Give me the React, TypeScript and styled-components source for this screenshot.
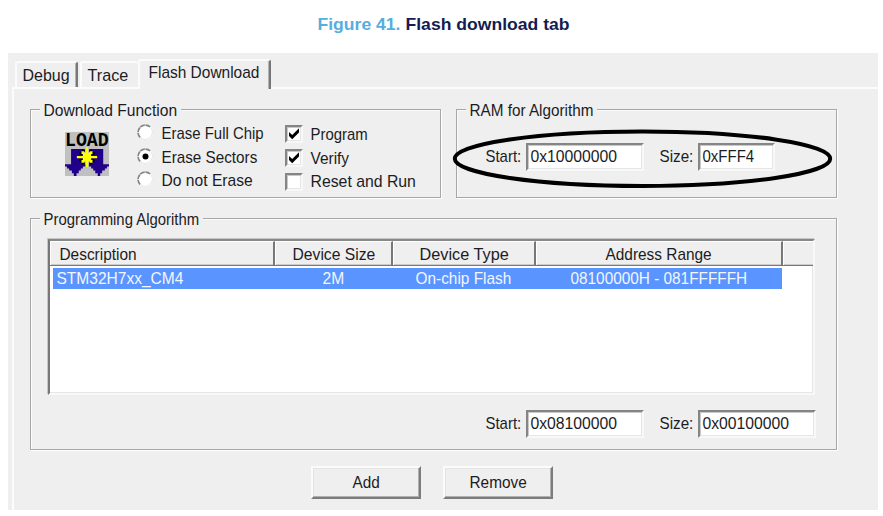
import React, { useLayoutEffect, useRef, useState } from 'react';
import styled, { createGlobalStyle, css } from 'styled-components';

const face = '#efefef';
const etch = '#a6a6a6';

const GlobalStyle = createGlobalStyle`
  * { box-sizing: border-box; }
  body { margin: 0; background: #fff; }
`;

const Page = styled.main`
  width: 883px;
  height: 516px;
  overflow: hidden;
  background: #fff;
  color: #1c1c24;
  font: 17px/20px "Liberation Sans", Arial, sans-serif;
`;

const Caption = styled.h1`
  display: flex;
  gap: 6px;
  height: 53px;
  margin: 0;
  padding: 14px 0 0 318px;
  font-size: 16.5px;
  font-weight: bold;
`;

const FigureNumber = styled.span` color: #57addf; `;
const FigureTitle = styled.span` color: #141c52; `;

const FitBox = styled.span<{ $width: number }>`
  display: block;
  flex: none;
  width: ${p => p.$width}px;
  height: 20px;
  white-space: pre;
`;

const FitInner = styled.span`
  display: inline-block;
  transform-origin: 0 50%;
`;

/* Condenses a line of text to the given advance width. */
function Fit({ w, children }: { w: number; children: string }) {
  const ref = useRef<HTMLSpanElement>(null);
  const [scale, setScale] = useState(1);
  useLayoutEffect(() => {
    if (ref.current) setScale((w + 1) / ref.current.offsetWidth);
  }, [w, children]);
  return (
    <FitBox $width={w}>
      <FitInner ref={ref} style={{ transform: `translateX(-0.5px) scaleX(${scale})` }}>{children}</FitInner>
    </FitBox>
  );
}

const Dialog = styled.section`
  width: 870px;
  height: 457px;
  margin-left: 8px;
  padding: 6px 0 0 4px;
  background: ${face};
`;

const Tabs = styled.nav`
  display: flex;
  align-items: flex-end;
  height: 28px;
  padding-left: 3px;
`;

const Tab = styled.div<{ $width: number; $active?: boolean; $edge?: boolean; $gap?: number }>`
  width: ${p => p.$width}px;
  height: ${p => (p.$active ? 30 : 26)}px;
  margin: 0 ${p => p.$gap ?? 0}px ${p => (p.$active ? -2 : 0)}px 0;
  padding: ${p => (p.$active ? '2px 0 0 9px' : '3px 0 0 6px')};
  background: ${face};
  border-top: 2px solid #fbfbfb;
  border-left: 2px solid #fbfbfb;
  border-radius: 3px 3px 0 0;
  ${p => p.$edge && css`
    border-right: 2px solid #777;
    box-shadow: inset -1px 0 0 #b4b4b4;
  `}
`;

const TabPage = styled.div`
  height: 423px;
  padding: 20px 0 0 17px;
  border-top: 2px solid #fcfcfc;
  border-left: 2px solid #fcfcfc;
`;

const TopGroups = styled.div`
  display: flex;
  gap: 15px;
  margin-left: -1px;
`;

const Group = styled.section<{ $width: number; $height: number }>`
  width: ${p => p.$width}px;
  height: ${p => p.$height}px;
  border: 1px solid ${etch};
  box-shadow: 1px 1px 0 #fff, inset 1px 1px 0 #fbfbfb;
`;

const GroupTitle = styled.div`
  width: max-content;
  height: 20px;
  margin: -9px 0 0 9px;
  padding: 0 4px;
  background: ${face};
`;

const FunctionBody = styled.div`
  display: flex;
  padding: 1px 0 0 34px;
`;

const LoadIcon = styled.svg`
  flex: none;
  width: 44px;
  height: 44px;
  margin: 10px 28px 0 0;
  overflow: visible;
`;

const Options = styled.div<{ $width: number; $top: number }>`
  width: ${p => p.$width}px;
  padding-top: ${p => p.$top}px;
`;

const Option = styled.label<{ $gap: number }>`
  display: flex;
  align-items: center;
  gap: ${p => p.$gap}px;
  height: 23.7px;
`;

const Radio = styled.svg`
  flex: none;
  width: 17px;
  height: 17px;
  margin-top: -3px;
`;

const sunken = css`
  background: #fff;
  border: 2px solid;
  border-color: #858585 #f8f8f8 #f8f8f8 #858585;
  box-shadow: inset 1px 1px 0 #c9c9c9, inset -1px -1px 0 #e6e6e6;
`;

const CheckBox = styled.span`
  ${sunken}
  display: flex;
  flex: none;
  width: 18px;
  height: 18px;
  margin-top: -1px;
`;

const Tick = styled.svg`
  width: 14px;
  height: 14px;
`;

const RangeRow = styled.div<{ $top: number; $left: number }>`
  display: flex;
  align-items: center;
  margin: ${p => p.$top}px 0 0 ${p => p.$left}px;
`;

const Field = styled.div<{ $width: number; $after?: number }>`
  ${sunken}
  width: ${p => p.$width}px;
  height: 28px;
  margin: 0 ${p => p.$after ?? 0}px 0 5px;
  padding: 2px 0 0 3px;
`;

const RamWrap = styled.div` position: relative; `;

const Ellipse = styled.svg`
  position: absolute;
  left: -6px;
  top: 17px;
  width: 386px;
  height: 66px;
  pointer-events: none;
`;

const AlgorithmSpace = styled.div` margin: 20px 0 0 -1px; `;

const List = styled.div`
  width: 767px;
  height: 156px;
  margin: 9px 0 0 17px;
  background: #fff;
  border: 2px solid;
  border-color: #777 #f8f8f8 #f8f8f8 #777;
  border-top-color: #888;
  box-shadow: inset -1px -1px 0 #e6e6e6, -1px -1px 0 #c6c6c6;
`;

const columns = '225px 118px 143px 247px 1fr';

const Header = styled.div`
  display: grid;
  grid-template-columns: ${columns};
  height: 25px;
  background: ${face};
  border-bottom: 2px solid #777;
`;

const HeaderCell = styled.div<{ $pad: number; $last?: boolean }>`
  padding: 3px 0 0 ${p => p.$pad}px;
  border-top: 1px solid #fff;
  border-left: 1px solid #fff;
  border-right: ${p => (p.$last ? '0' : '2px solid #777')};
  box-shadow: inset 0 -1px 0 #ccc;
`;

const Row = styled.div`
  display: grid;
  grid-template-columns: 222px 118px 143px 246px;
  width: 729px;
  height: 21px;
  margin: 2px 0 0 3px;
  padding-top: 1px;
  background: #5a94ff;
  color: #f2f6ff;
`;

const Cell = styled.div<{ $pad: number }>` padding-left: ${p => p.$pad}px; `;

const Actions = styled.div`
  display: flex;
  gap: 22px;
  margin: 16px 0 0 280px;
`;

const Button = styled.button`
  display: flex;
  align-items: center;
  justify-content: center;
  width: 110px;
  height: 33px;
  padding: 0;
  font: inherit;
  color: inherit;
  background: ${face};
  border: 2px solid;
  border-color: #fbfbfb #7c7c7c #7c7c7c #fbfbfb;
  box-shadow: inset -1px -1px 0 #b0b0b0, inset 1px 1px 0 #e4e4e4;
`;

function RadioMark({ checked }: { checked?: boolean }) {
  return (
    <Radio viewBox="0 0 17 17">
      <circle cx="8.5" cy="8.5" r="7.5" fill="#fff" />
      <path d="M3.2 13.5A7.2 7.2 0 0 1 13.5 3.2" fill="none" stroke="#858585" strokeWidth="1.7" strokeDasharray="5 .6" />
      <path d="M14 4A7.2 7.2 0 0 1 4 14" fill="none" stroke="#e5e5e5" strokeWidth="1" />
      {checked && <circle cx="8.5" cy="8.5" r="3" fill="#000" />}
    </Radio>
  );
}

function CheckMark({ checked }: { checked?: boolean }) {
  return (
    <CheckBox>
      {checked && (
        <Tick viewBox="0 0 14 14">
          <path d="M2 5L5.2 8L12 1.2V5.4L5.2 12.2L2 9Z" fill="#000" />
        </Tick>
      )}
    </CheckBox>
  );
}

function LoadMark() {
  return (
    <LoadIcon viewBox="0 0 32 32">
      <rect width="32" height="32" fill="#c0c0c0" />
      <path fill="#20008a" d="M4.4 12.4H13.5V23.5H14.8V25H13V26.5H11.5V28H10V30H8.4V32H6.4V30H5V28H3V26.5H1.5V25H0V23.5H4.4Z" />
      <path fill="#20008a" d="M27.8 12.4H18.5V23.5H17.4V25H19V26.5H20.5V28H22V30H23.8V32H25.6V30H27V28H29V26.5H30.5V25H32V23.5H27.8Z" />
      <path
        fill="#000"
        d="M12.5 12.5h2v2h-2zM17.5 12.5h2v2h-2zM10.5 14.5h2v2h-2zM19.5 14.5h2v2h-2zM10.5 20h2v2h-2zM19.5 20h2v2h-2zM12.5 22h2v1.6h-2zM17.5 22h2v1.6h-2z"
      />
      <path
        fill="#ff0"
        d="M13 15.2H19V21.2H13ZM15.2 11H16.8V25.4H15.2ZM8.6 17.4H23.4V19H8.6ZM12 14h2v2h-2zM18 14h2v2h-2zM12 20.4h2v2h-2zM18 20.4h2v2h-2z"
      />
      <text
        x="0"
        y="10.2"
        fontFamily="Liberation Mono, monospace"
        fontWeight="bold"
        fontSize="15"
        textLength="31.8"
        lengthAdjust="spacingAndGlyphs"
      >
        LOAD
      </text>
    </LoadIcon>
  );
}

const radios = [
  { label: 'Erase Full Chip', w: 101 },
  { label: 'Erase Sectors', w: 95, checked: true },
  { label: 'Do not Erase', w: 90 },
];

const checks = [
  { label: 'Program', w: 56, checked: true },
  { label: 'Verify', w: 38, checked: true },
  { label: 'Reset and Run', w: 104 },
];

export default function App() {
  return (
    <Page>
      <GlobalStyle />
      <Caption>
        <FigureNumber><Fit w={82}>Figure 41.</Fit></FigureNumber>
        <FigureTitle><Fit w={163}>Flash download tab</Fit></FigureTitle>
      </Caption>
      <Dialog>
        <Tabs>
          <Tab $width={63} $edge $gap={2}><Fit w={46}>Debug</Fit></Tab>
          <Tab $width={58}><Fit w={40}>Trace</Fit></Tab>
          <Tab $width={133} $active $edge><Fit w={110}>Flash Download</Fit></Tab>
        </Tabs>
        <TabPage>
          <TopGroups>
            <Group $width={411} $height={89}>
              <GroupTitle><Fit w={133}>Download Function</Fit></GroupTitle>
              <FunctionBody>
                <LoadMark />
                <Options $width={148} $top={0}>
                  {radios.map(r => (
                    <Option key={r.label} $gap={8}>
                      <RadioMark checked={r.checked} />
                      <Fit w={r.w}>{r.label}</Fit>
                    </Option>
                  ))}
                </Options>
                <Options $width={140} $top={1}>
                  {checks.map(c => (
                    <Option key={c.label} $gap={8}>
                      <CheckMark checked={c.checked} />
                      <Fit w={c.w}>{c.label}</Fit>
                    </Option>
                  ))}
                </Options>
              </FunctionBody>
            </Group>
            <RamWrap>
              <Group $width={381} $height={89}>
                <GroupTitle><Fit w={123}>RAM for Algorithm</Fit></GroupTitle>
                <RangeRow $top={22} $left={29}>
                  <Fit w={35}>Start:</Fit>
                  <Field $width={118} $after={16}><Fit w={86}>0x10000000</Fit></Field>
                  <Fit w={33}>Size:</Fit>
                  <Field $width={77}><Fit w={51}>0xFFF4</Fit></Field>
                </RangeRow>
              </Group>
              <Ellipse viewBox="0 0 386 66">
                <ellipse cx="192.5" cy="32.7" rx="187.7" ry="27.3" fill="none" stroke="#000" strokeWidth="4" />
              </Ellipse>
            </RamWrap>
          </TopGroups>
          <AlgorithmSpace>
            <Group $width={807} $height={232}>
              <GroupTitle><Fit w={155}>Programming Algorithm</Fit></GroupTitle>
              <List>
                <Header>
                  <HeaderCell $pad={9}><Fit w={76}>Description</Fit></HeaderCell>
                  <HeaderCell $pad={17}><Fit w={82}>Device Size</Fit></HeaderCell>
                  <HeaderCell $pad={26}><Fit w={88}>Device Type</Fit></HeaderCell>
                  <HeaderCell $pad={69}><Fit w={105}>Address Range</Fit></HeaderCell>
                  <HeaderCell $pad={0} $last />
                </Header>
                <Row>
                  <Cell $pad={4}><Fit w={126}>STM32H7xx_CM4</Fit></Cell>
                  <Cell $pad={48}><Fit w={21}>2M</Fit></Cell>
                  <Cell $pad={23}><Fit w={95}>On-chip Flash</Fit></Cell>
                  <Cell $pad={35}><Fit w={176}>08100000H - 081FFFFFH</Fit></Cell>
                </Row>
              </List>
              <RangeRow $top={15} $left={455}>
                <Fit w={35}>Start:</Fit>
                <Field $width={118} $after={16}><Fit w={86}>0x08100000</Fit></Field>
                <Fit w={33}>Size:</Fit>
                <Field $width={118}><Fit w={86}>0x00100000</Fit></Field>
              </RangeRow>
            </Group>
          </AlgorithmSpace>
          <Actions>
            <Button><Fit w={26}>Add</Fit></Button>
            <Button><Fit w={56}>Remove</Fit></Button>
          </Actions>
        </TabPage>
      </Dialog>
    </Page>
  );
}
